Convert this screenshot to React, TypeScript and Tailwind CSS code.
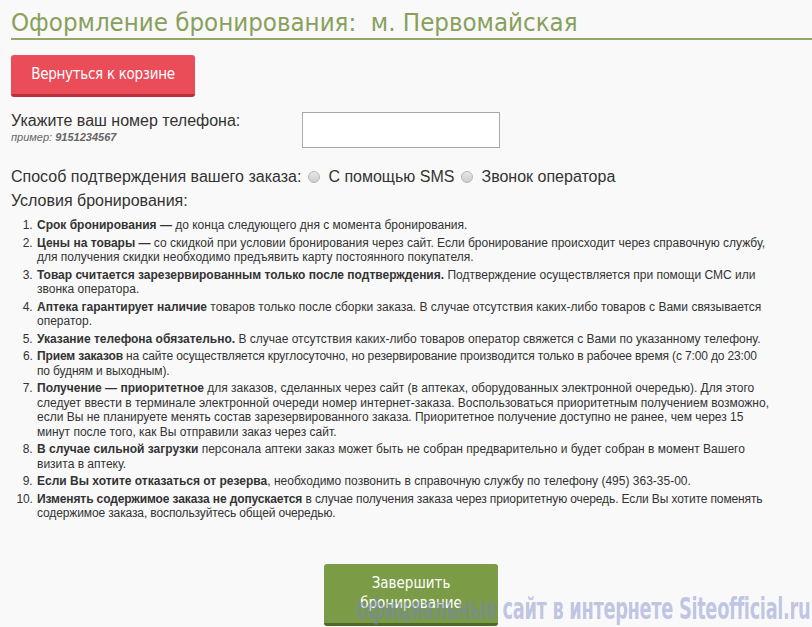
import React from "react";

const terms: { b: string; t: string; tight?: string }[] = [
  { b: "Срок бронирования —", t: " до конца следующего дня с момента бронирования." },
  {
    b: "Цены на товары —",
    t: " со скидкой при условии бронирования через сайт. Если бронирование происходит через справочную службу, для получения скидки необходимо предъявить карту постоянного покупателя.",
  },
  {
    b: "Товар считается зарезервированным только после подтверждения.",
    t: " Подтверждение осуществляется при помощи СМС или звонка оператора.",
  },
  {
    b: "Аптека гарантирует наличие",
    t: " товаров только после сборки заказа. В случае отсутствия каких-либо товаров с Вами связывается оператор.",
  },
  {
    b: "Указание телефона обязательно.",
    t: " В случае отсутствия каких-либо товаров оператор свяжется с Вами по указанному телефону.",
  },
  {
    b: "Прием заказов",
    t: " на сайте осуществляется круглосуточно, но резервирование производится только в рабочее время (с 7:00 до 23:00 по будням и выходным).",
    tight: "tracking-[-0.14px]",
  },
  {
    b: "Получение — приоритетное",
    t: " для заказов, сделанных через сайт (в аптеках, оборудованных электронной очередью). Для этого следует ввести в терминале электронной очереди номер интернет-заказа. Воспользоваться приоритетным получением возможно, если Вы не планируете менять состав зарезервированного заказа. Приоритетное получение доступно не ранее, чем через 15 минут после того, как Вы отправили заказ через сайт.",
  },
  {
    b: "В случае сильной загрузки",
    t: " персонала аптеки заказ может быть не собран предварительно и будет собран в момент Вашего визита в аптеку.",
  },
  {
    b: "Если Вы хотите отказаться от резерва",
    t: ", необходимо позвонить в справочную службу по телефону (495) 363-35-00.",
  },
  {
    b: "Изменять содержимое заказа не допускается",
    t: " в случае получения заказа через приоритетную очередь. Если Вы хотите поменять содержимое заказа, воспользуйтесь общей очередью.",
    tight: "tracking-[-0.12px]",
  },
];

function Radio() {
  return (
    <span className="inline-block w-[12px] h-[12px] rounded-full border border-[#b8b8b8] bg-gradient-to-b from-[#e8e8e8] to-[#cdcdcd] align-[-1px] ml-[7px] mr-[8px]" />
  );
}

export default function App() {
  return (
    <div className="relative min-h-[627px] bg-[#f9f9f9] text-[#333] font-['Liberation_Sans',Arial,sans-serif] overflow-hidden">
      <div className="pl-[11px] pt-[7px]">
        {/* Heading */}
        <h1 className="font-['DejaVu_Sans_Condensed','DejaVu_Sans',sans-serif] text-[25.6px] leading-[30px] text-[#88a05c] border-b-2 border-[#93a866] pb-[1px]">
          Оформление бронирования:&nbsp; м. Первомайская
        </h1>

        <button className="mt-[15px] w-[184px] h-[42px] rounded-[3px] bg-[#ea4c58] border-b-[3px] border-[#b8303b] text-white text-[15px] font-['DejaVu_Sans_Condensed',sans-serif] tracking-[-0.3px]">
          Вернуться к корзине
        </button>

        {/* Phone */}
        <div className="flex mt-[14px]">
          <div className="w-[291px]">
            <div className="text-[16px] leading-[20px]">Укажите ваш номер телефона:</div>
            <div className="text-[11px] leading-[13px] italic text-[#666]">
              пример: <b>9151234567</b>
            </div>
          </div>
          <input
            type="text"
            className="w-[198px] h-[36px] mt-[1px] bg-white border border-[#a9a9a9] outline-none"
          />
        </div>

        <div className="mt-[17px] text-[16px] leading-[24px]">
          Способ подтверждения вашего заказа:
          <Radio />С помощью SMS
          <Radio />Звонок оператора
        </div>
        <div className="text-[16px] leading-[24px]">Условия бронирования:</div>

        <ol className="mt-[5px] pl-[25px] pr-[40px] list-decimal text-[12px] leading-[14.5px] text-[#333]">
          {terms.map((item, i) => (
            <li key={i} className={`mb-[3px] pl-[1px] ${item.tight ?? ""}`}>
              <b>{item.b}</b>
              {item.t}
            </li>
          ))}
        </ol>

        <div className="flex pl-[313px] mt-[43px]">
          <button className="w-[174px] h-[62px] rounded-[3px] bg-[#7b9b46] border-b-[3px] border-[#4f6a27] text-white text-[15px] leading-[20px] font-['DejaVu_Sans_Condensed',sans-serif]">
            Завершить
            <br />
            бронирование
          </button>
        </div>
      </div>

      {/* Watermark */}
      <div className="absolute right-[2px] bottom-[3px] origin-right scale-x-[0.66] text-[30px] leading-[30px] font-bold font-['DejaVu_Sans_Condensed',sans-serif] tracking-[-0.5px] text-[#7584c6]/45 pointer-events-none whitespace-nowrap">
        официальные сайт в интернете Siteofficial.ru
      </div>
    </div>
  );
}
